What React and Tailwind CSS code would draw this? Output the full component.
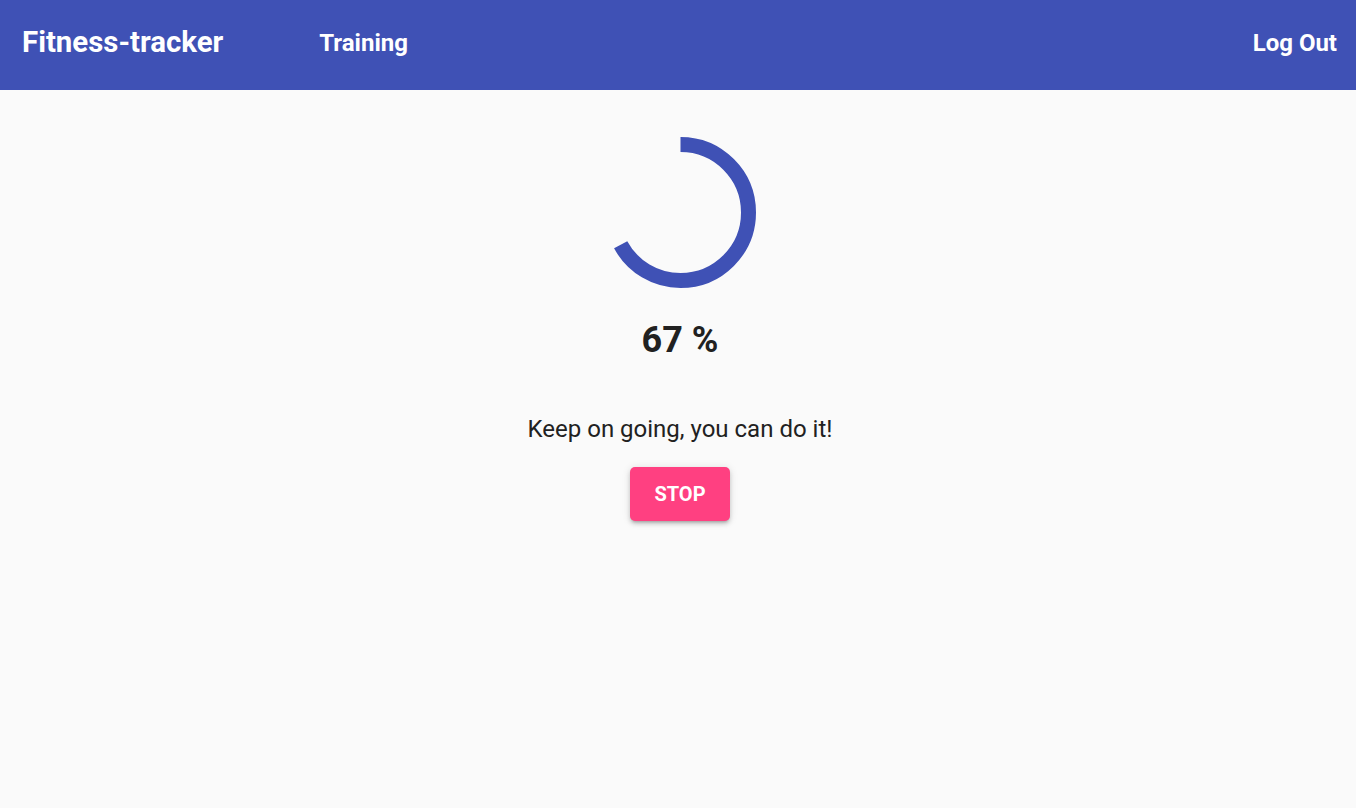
import React from 'react'

function Spinner({ value }) {
  const size = 151
  const stroke = 15
  const r = (size - stroke) / 2
  const c = 2 * Math.PI * r
  return (
    <svg width={size} height={size} viewBox={`0 0 ${size} ${size}`} className="-rotate-90">
      <circle
        cx={size / 2}
        cy={size / 2}
        r={r}
        fill="none"
        stroke="#3f51b5"
        strokeWidth={stroke}
        strokeDasharray={c}
        strokeDashoffset={c * (1 - value / 100)}
      />
    </svg>
  )
}

export default function App() {
  return (
    <div className="min-h-[808px] bg-[#fafafa] font-['Roboto',sans-serif]">
      <header className="h-[90px] bg-[#3f51b5] text-white flex items-center pl-[22px] pr-[19px] pb-[5px]">
        <span className="text-[29.4px] font-bold">Fitness-tracker</span>
        <nav className="ml-[96px]">
          <a className="text-[24px] font-bold">Training</a>
        </nav>
        <a className="ml-auto text-[24px] font-bold">Log Out</a>
      </header>
      <main className="flex flex-col items-center pt-[47px] pl-[4px]">
        <Spinner value={67} />
        <h1 className="mt-[34px] text-[36px] font-bold text-[#212121] leading-none">67 %</h1>
        <p className="mt-[57px] text-[24px] leading-[28px] text-[#212121]">Keep on going, you can do it!</p>
        <button className="mt-[24px] w-[100px] h-[54px] rounded-[5px] bg-[#ff4081] text-white text-[20px] font-bold shadow-[0_3px_3px_-2px_rgba(0,0,0,0.2),0_3px_4px_0_rgba(0,0,0,0.14),0_1px_8px_0_rgba(0,0,0,0.12)]">
          STOP
        </button>
      </main>
    </div>
  )
}
